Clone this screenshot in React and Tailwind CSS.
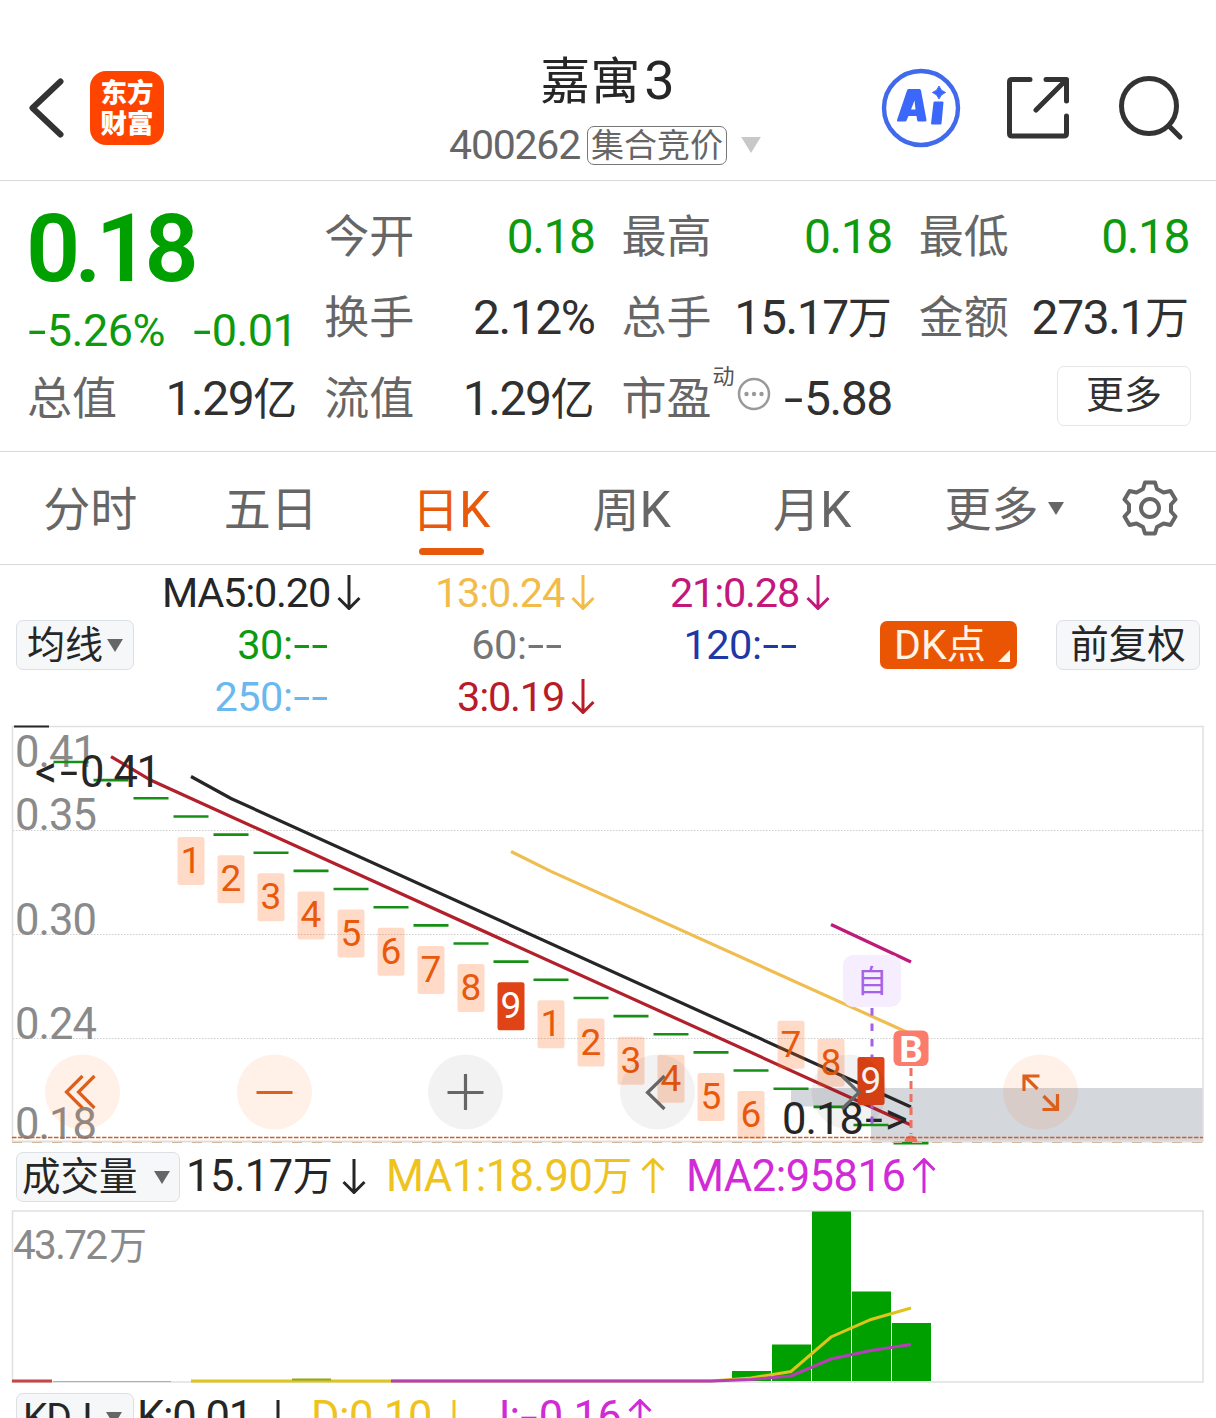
import React from "react";
import clsx from "clsx";

const COL = 40;
const FIRST_X = 31;
const STEP = 18.15;

const tabs = [
  { id: "minute", label: "分时" },
  { id: "five", label: "五日" },
  { id: "day", label: "日", latin: "K" },
  { id: "week", label: "周", latin: "K" },
  { id: "month", label: "月", latin: "K" },
];

const averages = [
  { text: "MA5:0.20", color: "text-[#262626]", down: true },
  { text: "13:0.24", color: "text-[#f2bc4b]", down: true },
  { text: "21:0.28", color: "text-[#c4177c]", down: true },
  { text: "30:--", color: "text-[#0e9a0e]" },
  { text: "60:--", color: "text-[#757575]" },
  { text: "120:--", color: "text-[#1f38a5]" },
  { text: "250:--", color: "text-[#6bb8ee]" },
  { text: "3:0.19", color: "text-[#b81c28]", down: true },
];

const axisLabels = [
  { text: "0.41", y: 767 },
  { text: "0.35", y: 830 },
  { text: "0.30", y: 934.5 },
  { text: "0.24", y: 1038.5 },
  { text: "0.18", y: 1139 },
];

// TD sequence marks, one per candle column
const marks = [
  ...[1, 2, 3, 4, 5, 6, 7, 8, 9, 1, 2, 3, 4, 5, 6].map((n, i) => ({
    n,
    x: FIRST_X + (i + 4) * COL,
    y: 837 + i * STEP,
  })),
  ...[7, 8, 9].map((n, i) => ({
    n,
    x: FIRST_X + (i + 19) * COL,
    y: 1020.7 + i * STEP,
  })),
];

const volumes = [
  { x: 732, y: 1371 },
  { x: 772, y: 1344.5 },
  { x: 812, y: 1211.5 },
  { x: 852, y: 1291.5 },
  { x: 892, y: 1323 },
];

// Latin digits with a widened hyphen
const Num = ({ children, className, loose }) => (
  <span
    className={clsx(
      "whitespace-nowrap",
      loose ? "tracking-[-0.012em]" : "tracking-[-0.03em]",
      className
    )}
  >
    {children.split("").map((c, i) =>
      c === "-" ? (
        <span key={i} className="inline-block w-[0.44em] text-center tracking-normal">
          <span className="inline-block scale-x-[1.45]">-</span>
        </span>
      ) : (
        c
      )
    )}
  </span>
);

const Arrow = ({ up, className }) => (
  <svg
    viewBox="0 0 26 36"
    className={clsx("mb-[2px] h-9 w-[26px] shrink-0", up && "rotate-180", className)}
    fill="none"
    stroke="currentColor"
    strokeWidth="3"
    aria-hidden="true"
  >
    <path d="M13 1V34M2.5 24L13 34.5L23.5 24" />
  </svg>
);

const Caret = ({ className }) => (
  <svg viewBox="0 0 16 13" className={clsx("shrink-0", className)} fill="currentColor" aria-hidden="true">
    <path d="M0 0H16L8 13Z" />
  </svg>
);

const Stat = ({ label, value, unit, green }) => (
  <div className="flex h-[81px] items-center justify-between">
    <span className="text-[45px] leading-none text-[#666]">{label}</span>
    <span
      className={clsx(
        "flex items-baseline pb-[2px] text-[48px] leading-none",
        green ? "text-[#0e9a0e]" : "text-[#303030]"
      )}
    >
      <Num>{value}</Num>
      {unit && <span className="text-[44px]">{unit}</span>}
    </span>
  </div>
);

const Header = () => (
  <header className="flex h-[181px] shrink-0 border-b border-[#d9d9d9]">
    <div className="flex flex-1 items-start pt-[71px] pl-[28px]">
      <svg viewBox="0 0 36 60" className="mt-[7px] h-[60px] w-9" fill="none" aria-hidden="true">
        <path
          d="M32.5 3.5L4.5 30L32.5 56.5"
          stroke="#333"
          strokeWidth="6"
          strokeLinecap="round"
          strokeLinejoin="round"
        />
      </svg>
      <div className="ml-[26px] flex h-[74px] w-[74px] flex-col items-center justify-center rounded-[16px] bg-[#ff4400] text-[26.5px] leading-[31px] font-black text-white">
        <span>东方</span>
        <span>财富</span>
      </div>
    </div>
    <div className="flex flex-col items-center pt-[55px]">
      <h1 className="flex items-baseline pl-[3px] text-[50px] leading-[52px] text-[#262626]">
        嘉寓<span className="ml-[4px] text-[54px]">3</span>
      </h1>
      <div className="mt-[16px] flex h-[42px] items-center text-[#666]">
        <Num className="text-[41px] leading-none">400262</Num>
        <span className="ml-[7px] flex h-[39px] items-center rounded-[7px] border border-[#777] px-[3px] text-[33px] leading-none">
          集合竞价
        </span>
        <Caret className="ml-[12px] h-4 w-6 text-[#c8c8c8]" />
      </div>
    </div>
    <div className="flex flex-1 items-start justify-end pt-[68px] pr-8">
      <svg viewBox="0 0 80 80" className="h-20 w-20" aria-hidden="true">
        <circle cx="40" cy="40" r="37" fill="none" stroke="#4169ec" strokeWidth="4.4" />
        <path
          d="M27.500 21H38.500Q39.800 21 40 22.500L45.500 52Q45.500 53.500 44 53.500H37.500Q36.300 53.500 36.100 52L35.500 48H27.500L25.500 52.500Q25 53.500 24 53.500H17Q15.500 53.500 16 52L26 22.500Q26.500 21 27.500 21ZM30 41.500H34.500L33.500 32.500Z"
          fill="#3b68fb"
          fillRule="evenodd"
        />
        <path d="M53.500 34.500H61.500L59.500 55.500H51Z" fill="#3b68fb" stroke="#3b68fb" strokeWidth="2" strokeLinejoin="round" />
        <path d="M58 18Q59.500 23 64.500 24.500Q59.500 26 58 31Q56.500 26 51.500 24.500Q56.500 23 58 18Z" fill="#3b68fb" stroke="#3b68fb" />
      </svg>
      <svg
        viewBox="0 0 64 64"
        className="mt-2 ml-[45px] h-16 w-16"
        fill="none"
        stroke="#333"
        strokeWidth="5"
        strokeLinecap="round"
        strokeLinejoin="round"
        aria-hidden="true"
      >
        <path d="M24 3.500H6Q3.500 3.500 3.500 6V57.500Q3.500 60 6 60H58Q60.500 60 60.500 57.500V40M40 3.500H60.500V25M60 4L30 34" />
      </svg>
      <svg
        viewBox="0 0 66 66"
        className="mt-[7px] ml-[48px] h-[66px] w-[66px]"
        fill="none"
        stroke="#333"
        strokeWidth="5"
        strokeLinecap="round"
        aria-hidden="true"
      >
        <circle cx="31" cy="31" r="27.500" />
        <path d="M51 51L62 62" />
      </svg>
    </div>
  </header>
);

const Quote = () => (
  <section className="grid h-[271px] shrink-0 grid-cols-4 grid-rows-[81px_81px_81px] gap-x-[27px] border-b border-[#d9d9d9] px-[27px] pt-4">
    <div className="row-span-2 flex flex-col text-[#00a000]">
      <span className="mt-1 ml-[-1px] text-[95px] leading-[96px] font-semibold tracking-[-0.06em]">0.18</span>
      <div className="mt-[8px] flex justify-between text-[45px] leading-[52px] text-[#0e9a0e]">
        <Num loose>-5.26%</Num>
        <Num loose>-0.01</Num>
      </div>
    </div>
    <Stat label="今开" value="0.18" green />
    <Stat label="最高" value="0.18" green />
    <Stat label="最低" value="0.18" green />
    <Stat label="换手" value="2.12%" />
    <Stat label="总手" value="15.17" unit="万" />
    <Stat label="金额" value="273.1" unit="万" />
    <Stat label="总值" value="1.29" unit="亿" />
    <Stat label="流值" value="1.29" unit="亿" />
    <div className="flex h-[81px] items-center">
      <span className="text-[45px] leading-none text-[#666]">市盈</span>
      <span className="mb-[45px] ml-px text-[22px] leading-none text-[#555]">动</span>
      <svg viewBox="0 0 34 34" className="mb-[11px] ml-[2px] h-[34px] w-[34px]" fill="#999" aria-hidden="true">
        <circle cx="17" cy="17" r="15" fill="none" stroke="#999" strokeWidth="2.500" />
        <circle cx="9.500" cy="17" r="2.200" />
        <circle cx="17" cy="17" r="2.200" />
        <circle cx="24.500" cy="17" r="2.200" />
      </svg>
      <Num className="ml-auto pb-[2px] text-[48px] leading-none text-[#303030]">-5.88</Num>
    </div>
    <div className="flex h-[81px] items-center justify-end">
      <button className="mr-[-2px] mb-[8px] flex h-[60px] w-[134px] items-center justify-center rounded-[7px] border-[1.5px] border-[#e6e6e6] pb-px text-[38px] leading-none text-[#303030]">
        更多
      </button>
    </div>
  </section>
);

const Tabs = () => (
  <nav className="flex h-[113px] shrink-0 items-stretch border-b border-[#d9d9d9] text-[47px] leading-none text-[#666]">
    {tabs.map((tab) => (
      <button
        key={tab.id}
        className={clsx(
          "relative flex w-[180.5px] items-center justify-center pt-[3px]",
          tab.id === "day" && "text-[#e9590c]"
        )}
      >
        <span className="flex items-baseline">
          {tab.label}
          {tab.latin && <span className="text-[50px]">{tab.latin}</span>}
        </span>
        {tab.id === "day" && (
          <span className="absolute bottom-[9px] h-[7px] w-[65px] rounded-full bg-[#e9590c]" />
        )}
      </button>
    ))}
    <button className="flex w-[203px] items-center justify-center">
      <span className="pt-[3px]">更多</span>
      <Caret className="ml-[9px] h-[13px] w-4" />
    </button>
    <button className="flex items-center pl-4">
      <svg
        viewBox="0 0 56 56"
        className="h-14 w-14"
        fill="none"
        stroke="#666"
        strokeWidth="4"
        strokeLinejoin="round"
        aria-hidden="true"
      >
        <path d="M23 2.500H33L35 9L41.500 12.500L48.500 11L53.500 19.500L49 24.500V31.500L53.500 36.500L48.500 45L41.500 43.500L35 47L33 53.500H23L21 47L14.500 43.500L7.500 45L2.500 36.500L7 31.500V24.500L2.500 19.500L7.500 11L14.500 12.500L21 9Z" />
        <circle cx="28" cy="28" r="9" />
      </svg>
    </button>
  </nav>
);

const Averages = () => (
  <section className="flex h-[160px] shrink-0 items-center px-4 text-[38px] leading-none text-[#262626]">
    <button className="flex h-[50px] w-[118px] shrink-0 items-center rounded-[7px] border border-[#dcdfe3] bg-[#f6f7f9] pl-[10px]">
      均线
      <Caret className="ml-1 h-[13px] w-4 text-[#666]" />
    </button>
    <div className="grid w-[697px] shrink-0 grid-cols-[228px_234px_235px] grid-rows-[52px_52px_52px] text-[41.5px]">
      {averages.map((a) => (
        <div key={a.text} className={clsx("flex items-center justify-end", a.color)}>
          <Num loose={!a.down}>{a.text}</Num>
          {a.down ? <Arrow className="ml-[6px]" /> : <span className="w-[33px]" />}
        </div>
      ))}
    </div>
    <button className="relative ml-[49px] flex h-12 w-[137px] shrink-0 items-center rounded-[7px] bg-[#ea5504] pl-[14px] text-[39px] text-[#fff3e4]">
      <span className="text-[41px]">DK</span>点
      <span className="absolute right-[7px] bottom-[7px] h-3 w-3 bg-[#fff3e4] [clip-path:polygon(100%_0,100%_100%,0_100%)]" />
    </button>
    <button className="ml-[39px] flex h-[50px] w-[144px] shrink-0 items-center justify-center rounded-[7px] border border-[#dcdfe3] bg-[#f6f7f9] text-[38.5px]">
      前复权
    </button>
  </section>
);

const Control = ({ x, orange, children }) => (
  <g transform={`translate(${x} 1092)`}>
    <circle r="37.500" fill={orange ? "#ff6a20" : "#000"} fillOpacity={orange ? 0.1 : 0.05} />
    <g fill="none" stroke={orange ? "#dc5f1c" : "#666"} strokeWidth="3.200">
      {children}
    </g>
  </g>
);

const candles = Array.from({ length: 22 }, (_, i) => ({
  x: FIRST_X + (i + 1) * COL,
  y: 762 + i * STEP,
}));

const PriceChart = () => (
  <svg viewBox="0 725 1216 420" className="block h-[420px] w-full shrink-0" role="img" aria-label="日K">
    <path d="M791 1088H1203V1142H871V1106.500H791Z" fill="#d4d7dc" />
    <path d="M12.500 1142V726.500H1203V1142" fill="none" stroke="#e0e0e0" strokeWidth="1.500" />
    <path d="M12 1141.500H1203" stroke="#dedede" strokeWidth="2" />
    {[830.5, 934.5, 1038.5].map((y) => (
      <path key={y} d={`M13 ${y}H1203`} stroke="#cfcfcf" strokeDasharray="1.500 1.500" />
    ))}
    <g fill="#8a8a8a" fontSize="43.500">
      {axisLabels.map((l) => (
        <text key={l.text} x="15" y={l.y} textLength="82">
          {l.text}
        </text>
      ))}
    </g>

    <path d="M14 726.500H49" stroke="#262626" strokeWidth="2" />
    {candles.map((c) => (
      <path key={c.x} d={`M${c.x - 17.5} ${c.y}h35`} stroke="#159015" strokeWidth="2.600" />
    ))}

    <g fill="none" strokeWidth="3.200">
      <path d="M191 776.500L231 798.500L911 1107" stroke="#262626" />
      <path d="M111 756.500L151 780.300L911 1125" stroke="#b2202c" />
      <path d="M511 851.500L551 871.400L911 1034" stroke="#f0bd50" />
      <path d="M831 924.500L911 962" stroke="#be1a7a" />
    </g>

    <g fill="#262626" fontSize="43.500">
      <text x="35" y="787" textLength="22">&lt;</text>
      <text x="60" y="787" textLength="18" lengthAdjust="spacingAndGlyphs">-</text>
      <text x="80" y="787" textLength="81">0.41</text>
      <text x="782" y="1134" textLength="82">0.18</text>
      <text x="865" y="1134" textLength="18" lengthAdjust="spacingAndGlyphs">-</text>
      <text x="885" y="1134" textLength="23">&gt;</text>
    </g>

    <path d="M872 1008V1128" stroke="#a561e8" strokeWidth="3" strokeDasharray="7.500 8" />
    <rect x="843" y="955" width="58" height="52" rx="10" fill="#f6eeff" />
    <text x="872" y="992" textAnchor="middle" fontSize="31" fill="#a561e8">
      自
    </text>

    {marks.map((m) => (
      <g key={m.x} textAnchor="middle" fontSize="37">
        <rect
          x={m.x - 13.5}
          y={m.y}
          width="27"
          height="48"
          rx="2.500"
          fill={m.n === 9 ? "#e04416" : "#ff6a20"}
          fillOpacity={m.n === 9 ? 1 : 0.25}
        />
        <text x={m.x} y={m.y + 36} fill={m.n === 9 ? "#fff" : "#e8590c"}>
          {m.n}
        </text>
      </g>
    ))}

    <path d="M911 1068V1134" stroke="#f0705f" strokeWidth="3" strokeDasharray="8 5" />
    <path d="M904.500 1142A6.500 6.500 0 0 1 917.500 1142Z" fill="#f0705f" />
    <rect x="893.500" y="1030.500" width="35" height="35.500" rx="6" fill="#f97c6c" />
    <text x="911" y="1061.500" textAnchor="middle" fontSize="37" fontWeight="700" fill="#fff">
      B
    </text>

    <path d="M12 1137.500H1203" stroke="#cc6128" strokeWidth="1.400" strokeDasharray="4.500 1.500" />
    <path d="M12 1142.500H1203" stroke="#d2b89c" strokeWidth="1.200" strokeDasharray="10 10" />

    <Control x={82.5} orange>
      <path d="M0 -16L-16 0L0 16M12 -16L-4 0L12 16" />
    </Control>
    <Control x={274.5} orange>
      <path d="M-18 0.500H18" />
    </Control>
    <Control x={465.5}>
      <path d="M-18 0.500H18M0 -18V18" />
    </Control>
    <Control x={657.5}>
      <path d="M7 -16L-10 0.500L7 17" />
    </Control>
    <Control x={849}>
      <path d="M-7 -16L10 0.500L-7 17" />
    </Control>
    <Control x={1040.5} orange>
      <path d="M-16.500 -1V-16H-1M-16 -16L-3 -3M2 17.500H17V2M16 17L3 4" />
    </Control>
  </svg>
);

const VolumeLegend = () => (
  <div className="flex h-[64px] shrink-0 items-center pl-4 text-[43.5px] leading-none">
    <button className="flex h-[50px] w-[164px] shrink-0 items-center rounded-[7px] border border-[#dcdfe3] bg-[#f6f7f9] pl-[5px] text-[38.5px] text-[#262626]">
      成交量
      <Caret className="ml-4 h-[13px] w-4 text-[#666]" />
    </button>
    <div className="flex w-[206px] items-center pl-[6px] text-[#262626]">
      <Num loose>15.17</Num>
      <span className="text-[40px]">万</span>
      <Arrow className="ml-[8px]" />
    </div>
    <div className="flex w-[300px] items-center text-[#efc31e]">
      <Num loose>MA1:18.90</Num>
      <span className="text-[40px]">万</span>
      <Arrow up className="ml-[8px]" />
    </div>
    <div className="flex items-center text-[#d02bd6]">
      <Num loose>MA2:95816</Num>
      <Arrow up className="ml-[6px]" />
    </div>
  </div>
);

const VolumeChart = () => (
  <svg viewBox="0 1209 1216 176" className="block h-[176px] w-full shrink-0" role="img" aria-label="成交量">
    <rect x="12.500" y="1211" width="1190.500" height="171" fill="none" stroke="#e0e0e0" strokeWidth="1.500" />
    <g fill="#8a8a8a">
      <text x="13" y="1258.500" fontSize="40.500" textLength="95">
        43.72
      </text>
      <text x="109" y="1258.500" fontSize="38">
        万
      </text>
    </g>
    {volumes.map((v) => (
      <rect key={v.x} x={v.x} y={v.y} width="39" height={1381 - v.y} fill="#00a000" />
    ))}
    <g fill="none" strokeWidth="3">
      <path d="M12 1381H52" stroke="#c44646" />
      <path d="M53 1381.500H171" stroke="#9dbb9d" strokeWidth="1" />
      <path d="M191 1381H711L751 1378L791 1371.500L831 1337L871 1319.500L911 1308" stroke="#dfc41e" />
      <path d="M292 1379.500H331" stroke="#8fa81c" strokeWidth="2" />
      <path d="M391 1381H711L751 1379.500L791 1376L831 1359L871 1350.500L911 1344.500" stroke="#b63fb8" />
    </g>
  </svg>
);

const KdjLegend = () => (
  <div className="mt-2 flex h-[50px] shrink-0 items-center pl-4 text-[43.5px] leading-none">
    <button className="flex h-[50px] w-[118px] shrink-0 items-center rounded-[7px] border border-[#dcdfe3] bg-[#f6f7f9] pl-[5px] text-[39px] text-[#262626]">
      <Num className="w-[70px]">KDJ</Num>
      <Caret className="ml-[14px] h-[13px] w-4 text-[#666]" />
    </button>
    <div className="flex w-[177px] items-center justify-between pr-[20px] pl-[3px] text-[#262626]">
      <Num>K:0.01</Num>
      <Arrow />
    </div>
    <div className="flex w-[175px] items-center justify-between pr-[19px] text-[#efc31e]">
      <Num loose>D:0.10</Num>
      <Arrow />
    </div>
    <div className="flex w-[167px] items-center justify-between text-[#d02bd6]">
      <Num loose>J:-0.16</Num>
      <Arrow up />
    </div>
  </div>
);

export default function App() {
  return (
    <main className="flex h-[1418px] w-[1216px] flex-col overflow-hidden bg-white font-[Roboto,'Noto_Sans_CJK_SC',sans-serif]">
      <Header />
      <Quote />
      <Tabs />
      <Averages />
      <PriceChart />
      <VolumeLegend />
      <VolumeChart />
      <KdjLegend />
    </main>
  );
}
